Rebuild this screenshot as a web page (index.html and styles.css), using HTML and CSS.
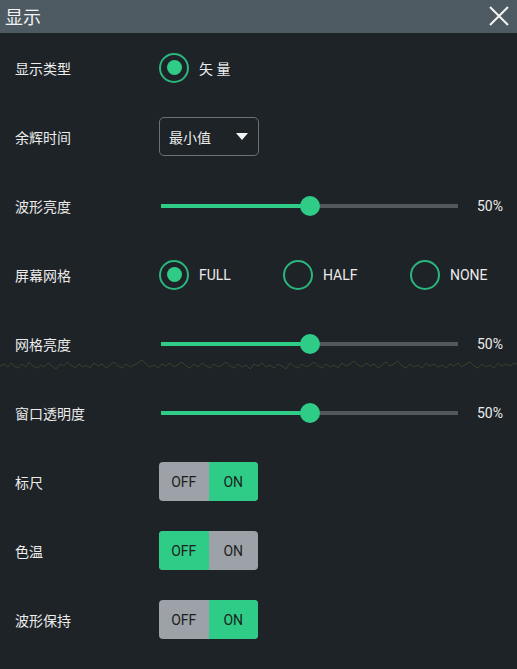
FILE: index.html
```html
<!DOCTYPE html>
<html lang="zh-CN">
<head>
    <meta charset="UTF-8">
    <meta name="viewport" content="width=device-width, initial-scale=1.0">
    <title>显示</title>
    <link rel="stylesheet" href="styles.css">
</head>
<body>
    <div class="panel">
        <div class="header">
            <span class="title">显示</span>
            <svg class="close" width="20" height="20" viewBox="0 0 20 20">
                <path d="M1 1 L19 19 M19 1 L1 19" stroke="#f4f4f4" stroke-width="2" fill="none"/>
            </svg>
        </div>

        <div class="row">
            <span class="label">显示类型</span>
            <div class="radios">
                <div class="radio checked"><span class="dot"></span><span class="radio-text">矢 量</span></div>
            </div>
        </div>

        <div class="row">
            <span class="label">余辉时间</span>
            <div class="select">
                <span>最小值</span>
                <span class="caret"></span>
            </div>
        </div>

        <div class="row">
            <span class="label">波形亮度</span>
            <div class="slider">
                <div class="track"><div class="fill" style="width: 50%"></div><div class="thumb" style="left: 50%"></div></div>
                <span class="value">50%</span>
            </div>
        </div>

        <div class="row">
            <span class="label">屏幕网格</span>
            <div class="radios">
                <div class="radio checked opt-full"><span class="dot"></span><span class="radio-text">FULL</span></div>
                <div class="radio opt-half"><span class="dot"></span><span class="radio-text">HALF</span></div>
                <div class="radio"><span class="dot"></span><span class="radio-text">NONE</span></div>
            </div>
        </div>

        <div class="row">
            <span class="label">网格亮度</span>
            <div class="slider">
                <div class="track"><div class="fill" style="width: 50%"></div><div class="thumb" style="left: 50%"></div></div>
                <span class="value">50%</span>
            </div>
            <svg class="trace" width="517" height="20" viewBox="0 350 517 20">
                <polyline fill="none" stroke="#3f4c30" stroke-width="1" points="0,364 4,362 8,365 11,361 14,364 18,366 22,362 26,365 29,360 33,364 37,366 41,363 44,365 48,361 52,364 56,367 60,362 64,364 67,360 71,363 75,366 79,362 83,365 86,363 90,366 94,361 98,364 102,362 106,366 110,363 114,360 118,364 122,366 126,362 130,365 134,363 138,361 142,358 146,362 150,365 154,363 158,366 162,362 166,364 170,361 174,365 178,363 182,360 186,364 190,366 194,362 198,365 202,361 206,364 210,366 214,362 218,365 222,363 226,360 230,364 234,366 238,362 242,365 246,363 250,367 254,362 258,364 262,361 266,365 270,363 274,366 278,362 282,364 286,367 290,361 294,364 298,366 302,362 306,365 310,363 314,360 318,364 322,366 326,362 330,365 334,363 338,366 342,361 346,364 350,362 354,359 358,363 362,365 366,361 370,364 374,362 378,366 382,363 386,360 390,364 394,362 398,359 402,364 406,366 410,362 414,365 418,363 422,366 426,361 430,364 434,362 438,365 442,363 446,366 450,362 454,364 458,361 462,365 466,362 470,360 474,364 478,366 482,362 486,365 490,363 494,366 498,361 502,364 506,362 510,364 514,361 517,362"/>
            </svg>
        </div>

        <div class="row">
            <span class="label">窗口透明度</span>
            <div class="slider">
                <div class="track"><div class="fill" style="width: 50%"></div><div class="thumb" style="left: 50%"></div></div>
                <span class="value">50%</span>
            </div>
        </div>

        <div class="row">
            <span class="label">标尺</span>
            <div class="toggle">
                <span class="seg">OFF</span>
                <span class="seg on">ON</span>
            </div>
        </div>

        <div class="row">
            <span class="label">色温</span>
            <div class="toggle">
                <span class="seg on">OFF</span>
                <span class="seg">ON</span>
            </div>
        </div>

        <div class="row">
            <span class="label">波形保持</span>
            <div class="toggle">
                <span class="seg">OFF</span>
                <span class="seg on">ON</span>
            </div>
        </div>
    </div>
</body>
</html>
```

FILE: styles.css
```css
body {
    margin: 0;
    background-color: #1e2327;
    font-family: Roboto, "Noto Sans CJK SC", sans-serif;
    color: #ececec;
}

.panel {
    width: 517px;
    height: 669px;
    background-color: #1e2327;
}

.header {
    height: 33px;
    background-color: #4e5a61;
    display: flex;
    align-items: center;
    justify-content: space-between;
    padding: 0 8px 0 5px;
}

.title {
    font-family: "Noto Sans CJK SC", sans-serif;
    font-size: 18px;
    color: #f2f2f2;
    margin-top: -1px;
}

.close {
    display: block;
    margin-top: -1px;
}

.row {
    position: relative;
    height: 69px;
    display: flex;
    align-items: center;
    padding-left: 15px;
}

.label {
    width: 144px;
    font-family: "Noto Sans CJK SC", sans-serif;
    font-size: 14px;
    color: #ececec;
}

.radios {
    display: flex;
}

.radio {
    display: flex;
    align-items: center;
    font-size: 14px;
    color: #ececec;
}

.opt-full {
    width: 124px;
}

.opt-half {
    width: 127px;
}

.dot {
    box-sizing: border-box;
    width: 30px;
    height: 30px;
    border: 2.5px solid #2bb67c;
    border-radius: 50%;
    display: flex;
    align-items: center;
    justify-content: center;
}

.radio.checked .dot::after {
    content: "";
    width: 15px;
    height: 15px;
    border-radius: 50%;
    background-color: #2ecc87;
}

.radio-text {
    margin-left: 10px;
}

.select {
    box-sizing: border-box;
    width: 100px;
    height: 39px;
    border: 1px solid #6b7176;
    border-radius: 5px;
    display: flex;
    align-items: center;
    justify-content: space-between;
    padding: 0 10px 0 9px;
    font-family: "Noto Sans CJK SC", sans-serif;
    font-size: 14px;
    color: #ececec;
}

.caret {
    width: 0;
    height: 0;
    border-left: 6px solid transparent;
    border-right: 6px solid transparent;
    border-top: 7px solid #f4f4f4;
}

.slider {
    display: flex;
    align-items: center;
    margin-left: 2px;
}

.track {
    position: relative;
    width: 297px;
    height: 4px;
    background-color: #53585c;
}

.fill {
    height: 100%;
    background-color: #2ecc87;
}

.thumb {
    position: absolute;
    top: -8px;
    width: 20px;
    height: 20px;
    margin-left: -10px;
    border-radius: 50%;
    background-color: #2ecc87;
}

.value {
    margin-left: 19px;
    font-size: 14px;
    color: #ececec;
}

.trace {
    position: absolute;
    left: 0;
    top: 43px;
    opacity: 0.75;
}

.toggle {
    display: flex;
    width: 99px;
    height: 39px;
    border-radius: 4px;
    overflow: hidden;
    background-color: #9ca2a7;
}

.seg {
    flex: 1;
    display: flex;
    align-items: center;
    justify-content: center;
    font-size: 14px;
    color: #1b1e20;
}

.seg.on {
    background-color: #2ecc87;
}
```
